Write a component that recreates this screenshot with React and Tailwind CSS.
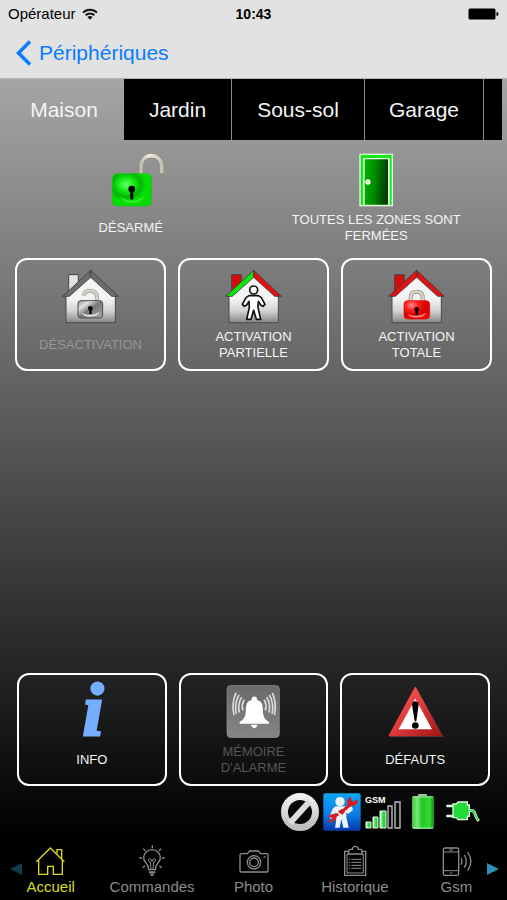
import { clsx } from 'clsx';

const tabs = [
  { name: 'Maison', width: 'w-31' },
  { name: 'Jardin', width: 'w-27' },
  { name: 'Sous-sol', width: 'w-[133px]' },
  { name: 'Garage', width: 'w-[119px]' },
];

function WifiIcon() {
  return (
    <svg width="16" height="12" viewBox="0 0 16 12" fill="none" stroke="#111" strokeWidth="1.9">
      <path d="M1 4.6a10 10 0 0 1 14 0" />
      <path d="M3.6 7.3a6.3 6.3 0 0 1 8.8 0" />
      <path d="M8 11.8 5.4 9.1a3.8 3.8 0 0 1 5.2 0z" fill="#111" stroke="none" />
    </svg>
  );
}

function BatteryFullIcon() {
  return (
    <svg width="31" height="12" viewBox="0 0 31 12">
      <rect x="0.5" y="0.5" width="27" height="11" rx="1.5" />
      <path d="M28.5 4a2 2 0 0 1 0 4z" />
    </svg>
  );
}

function UnlockedIcon() {
  return (
    <svg width="68" height="54" viewBox="51 39 204 162">
      <defs>
        <linearGradient id="steel" x1="0" x2="1">
          <stop offset="0" stopColor="#bdbaaa" />
          <stop offset="0.4" stopColor="#eeece2" />
          <stop offset="1" stopColor="#c4c1b2" />
        </linearGradient>
        <radialGradient id="greenLock" cx="0.36" cy="0.34" r="0.75">
          <stop offset="0" stopColor="#6dff6d" />
          <stop offset="0.25" stopColor="#18ee18" />
          <stop offset="0.5" stopColor="#04b404" />
          <stop offset="0.7" stopColor="#06e006" />
          <stop offset="1" stopColor="#05d805" />
        </radialGradient>
      </defs>
      <path d="M183 104V76a31 29 0 0 1 62 0v25" fill="none" stroke="#8d8a7d" strokeWidth="16" />
      <path d="M183 104V76a31 29 0 0 1 62 0v24" fill="none" stroke="url(#steel)" strokeWidth="11" />
      <rect x="97" y="101" width="117" height="97" rx="14" fill="url(#greenLock)" stroke="#06d006" strokeWidth="2" />
      <path d="M120 170q36 24 74-2q-8 20-37 21q-27-1-37-19z" fill="#3cf53c" opacity="0.7" />
      <circle cx="155" cy="147" r="10" />
      <path d="M151 150h9v26q-4 5-9 0z" />
    </svg>
  );
}

function DoorIcon() {
  return (
    <svg width="36" height="54" viewBox="264 38 108 162">
      <defs>
        <linearGradient id="door" x1="0" y1="0" x2="1" y2="0.15">
          <stop offset="0" stopColor="#00b400" />
          <stop offset="0.5" stopColor="#008a00" />
          <stop offset="1" stopColor="#003c00" />
        </linearGradient>
      </defs>
      <rect x="268" y="40" width="101" height="158" fill="#d9ffd9" />
      <path d="M272 44h93v150H272z" fill="#12e812" />
      <path d="M279 53h80v141h-80z" fill="#e9ffe9" />
      <path d="M284 57h70v136h-70z" fill="url(#door)" />
      <circle cx="294" cy="125" r="8" fill="#e5fbe5" />
      <circle cx="294" cy="125" r="2" fill="#a5c0a5" />
    </svg>
  );
}

function House({ left, right, chimney, children }) {
  return (
    <svg width="57" height="55" viewBox="0 0 171 165">
      <defs>
        <linearGradient id="wall" x1="0" y1="0" x2="0" y2="1">
          <stop offset="0.5" stopColor="#f4f4f4" />
          <stop offset="0.75" stopColor="#d5d5d5" />
          <stop offset="1" stopColor="#858585" />
        </linearGradient>
      </defs>
      <path d="M20 17h29v32L20 72z" fill={chimney} stroke="#444" strokeWidth="3" />
      <path d="M12 78 86 14l74 64v83H12z" fill="url(#wall)" stroke="#4b4b4b" strokeWidth="3" />
      <path d="M86 4 2 82h20L86 25z" fill={left} stroke="#3c3c3c" strokeWidth="2.5" />
      <path d="M86 4l83 78h-20L86 25z" fill={right} stroke="#3c3c3c" strokeWidth="2.5" />
      {children}
    </svg>
  );
}

function HouseUnlockedIcon() {
  return (
    <House left="#6d6d6d" right="#6d6d6d" chimney="#e2e2e2">
      <defs>
        <linearGradient id="greyLock" x1="0" y1="0" x2="1" y2="1">
          <stop offset="0" stopColor="#888" />
          <stop offset="0.25" stopColor="#e2e2e2" />
          <stop offset="0.5" stopColor="#777" />
          <stop offset="1" stopColor="#a8a8a8" />
        </linearGradient>
      </defs>
      <path d="M64 80q4-15 21-15 20 1 20 20v12" fill="none" stroke="#9d9b8e" strokeWidth="12" />
      <path d="M64 80q4-15 21-15 20 1 20 20v12" fill="none" stroke="#d3d1c4" strokeWidth="8" />
      <rect x="48" y="95" width="74" height="52" rx="9" fill="url(#greyLock)" stroke="#4d4d4d" strokeWidth="3" />
      <path d="M58 131q27 15 55-1q-7 13-28 13-20 0-27-12z" fill="#e5e5e5" />
      <circle cx="85" cy="118" r="7" />
      <path d="M82 120h7v15h-7z" />
    </House>
  );
}

function HousePersonIcon() {
  return (
    <House left="#0be70b" right="#e01010" chimney="#d80b0b">
      <g fill="#fff" stroke="#111" strokeWidth="5" strokeLinejoin="round">
        <path d="M72 80h28l9 6 11 20-6 6-7-4-7-11-1 18 8 36H94l-8-27-8 27H65l8-36-1-18-7 11-7 4-6-6 11-20z" />
        <circle cx="86" cy="63" r="12" />
      </g>
    </House>
  );
}

function HouseLockedIcon() {
  return (
    <House left="#e01212" right="#e01212" chimney="#d80b0b">
      <defs>
        <radialGradient id="redLock" cx="0.3" cy="0.25" r="0.9">
          <stop offset="0" stopColor="#ff8a8a" />
          <stop offset="0.3" stopColor="#ff1c1c" />
          <stop offset="0.6" stopColor="#d40000" />
          <stop offset="1" stopColor="#f80000" />
        </radialGradient>
      </defs>
      <path d="M68 98V84q1-16 18-16t18 16v14" fill="none" stroke="#8f8d80" strokeWidth="12" />
      <path d="M68 98V84q1-16 18-16t18 16v14" fill="none" stroke="#d3d1c4" strokeWidth="8" />
      <rect x="48" y="95" width="77" height="55" rx="11" fill="url(#redLock)" stroke="#e30000" strokeWidth="2" />
      <path d="M58 134q28 14 57-2q-7 14-29 14-21 0-28-12z" fill="#ff8080" />
      <circle cx="86" cy="121" r="7" />
      <path d="M83 122h7v16h-7z" />
    </House>
  );
}

function InfoIcon() {
  return (
    <svg width="57" height="55" viewBox="0 0 57 55" className="overflow-visible" aria-hidden="true">
      <text
        x="30"
        y="51"
        textAnchor="middle"
        fill="#75adff"
        stroke="#75adff"
        strokeWidth="3"
        className="font-['Liberation_Serif',serif] text-[74px] font-bold italic"
      >
        i
      </text>
    </svg>
  );
}

function BellIcon() {
  return (
    <svg width="55" height="55" viewBox="170 60 165 162">
      <defs>
        <linearGradient id="bellTile" x1="0" y1="0" x2="0" y2="1">
          <stop offset="0" stopColor="#6a6a6a" />
          <stop offset="1" stopColor="#858585" />
        </linearGradient>
      </defs>
      <rect x="173" y="63" width="157" height="156" rx="11" fill="url(#bellTile)" stroke="#959595" strokeWidth="2" />
      <g fill="#fff">
        <circle cx="255" cy="104" r="8" />
        <path d="M230 128q1-22 25-22t25 22c1 22 1 34 19 44v6h-88v-6c18-10 18-22 19-44z" />
        <path d="M245 181h19q-2 10-9 10t-10-10z" />
      </g>
      <g fill="none" stroke="#dcdcdc" strokeWidth="5">
        <path d="M225 106q-10 14-4 32M217 98q-13 22-7 46M209 91q-15 27-8 57M200 85q-14 32-6 67" />
        <path d="M284 106q10 14 4 32M292 98q13 22 7 46M300 91q15 27 8 57M309 85q14 32 6 67" />
      </g>
    </svg>
  );
}

function WarningIcon() {
  return (
    <svg width="57" height="55" viewBox="152 58 171 162">
      <defs>
        <linearGradient id="warn" x1="0" y1="0" x2="1" y2="1">
          <stop offset="0.3" stopColor="#f04848" />
          <stop offset="1" stopColor="#a31515" />
        </linearGradient>
      </defs>
      <path d="M241 69l80 146H161z" fill="#4a4a4a" />
      <path d="M237 67l78 144H159z" fill="url(#warn)" stroke="url(#warn)" strokeWidth="4" strokeLinejoin="round" />
      <path d="M237 100l50 92H187z" fill="#fff" />
      <path d="M227 118q1-10 10-10t10 10l-7 50h-5z" />
      <circle cx="237" cy="181" r="10" />
    </svg>
  );
}

function ForbiddenIcon() {
  return (
    <svg width="38" height="38" viewBox="1 1 38 38">
      <defs>
        <linearGradient id="ring" x1="0" y1="0" x2="0" y2="1">
          <stop offset="0" stopColor="#f2f2f2" />
          <stop offset="1" stopColor="#bdbdbd" />
        </linearGradient>
      </defs>
      <circle cx="20" cy="20" r="15.5" fill="none" stroke="url(#ring)" strokeWidth="7" />
      <path d="M30 9 10 31" stroke="#dcdcdc" strokeWidth="6" />
    </svg>
  );
}

function ServiceIcon() {
  return (
    <svg width="38" height="38" viewBox="158 22 114 114">
      <defs>
        <linearGradient id="serviceTile" x1="0" y1="0" x2="0" y2="1">
          <stop offset="0" stopColor="#0aa6f2" />
          <stop offset="0.55" stopColor="#0d7fe6" />
          <stop offset="1" stopColor="#0538a8" />
        </linearGradient>
      </defs>
      <rect x="159" y="23" width="112" height="112" rx="6" fill="url(#serviceTile)" />
      <g fill="#eef2f6">
        <circle cx="209" cy="48" r="14" />
        <path d="M196 62h28l10 4 10-4 4 10-14 12-6-3v14l4 17 3 14h-16l-6-26-5 26h-14l3-17 1-16-2-13-8 12 3 6-9 3-4-9 10-24z" />
      </g>
      <path d="M187 92 204 86 M216 77 241 55" stroke="#d91c24" strokeWidth="9" />
      <path d="M202 78l14 9 8-8-10-9z" fill="#d91c24" />
      <path
        d="M231 55q-4-17 11-21l1 10 7 4 12-7q2 17-14 20l-10 2zM196 86q-5-4-11 0-10 2-12 9l9-1 3 7-12 5q8 8 18 1 8-6 8-16z"
        fill="#d91c24"
      />
    </svg>
  );
}

function GsmIcon() {
  return (
    <svg width="36" height="36" viewBox="0 0 36 36">
      <text x="0" y="9" fill="#fff" className="font-['Liberation_Sans',sans-serif] text-[9px] font-bold">GSM</text>
      <defs>
        <linearGradient id="bars" x1="0" y1="0" x2="1" y2="0">
          <stop offset="0" stopColor="#c4ffc4" />
          <stop offset="0.6" stopColor="#25d53c" />
        </linearGradient>
      </defs>
      <g fill="url(#bars)" stroke="#eaffea">
        <path d="M1 28h5v6H1z" />
        <path d="M8 23h5v11H8z" />
        <path d="M15 17h6v17h-6z" />
      </g>
      <g fill="#0b0b0b" stroke="#b9b9b9" strokeWidth="1.4">
        <path d="M23 12h4v22h-4zM30 8h5v26h-5z" />
      </g>
    </svg>
  );
}

function CellIcon() {
  return (
    <svg width="24" height="36" viewBox="0 0 24 36">
      <defs>
        <linearGradient id="cell" x1="0" x2="1">
          <stop offset="0" stopColor="#3fc53f" />
          <stop offset="0.25" stopColor="#7be87b" />
          <stop offset="0.45" stopColor="#23c823" />
          <stop offset="0.8" stopColor="#2fdb2f" />
          <stop offset="1" stopColor="#148a14" />
        </linearGradient>
      </defs>
      <rect x="7" y="0" width="9" height="4" rx="1" fill="#9fc79f" />
      <rect x="1" y="2" width="22" height="33" rx="2" fill="url(#cell)" />
      <path d="M2 3h20M2 34h20" stroke="#b8dcb8" />
    </svg>
  );
}

function PlugIcon() {
  return (
    <svg width="36" height="26" viewBox="525 40 108 72">
      <path d="M529 58h24M529 88h24" stroke="#d8ffd8" strokeWidth="8" />
      <path d="M549 52h10l5-6h28v9h6v34h-6v10h-28l-5-6h-10z" fill="#24d83a" stroke="#dcffdc" strokeWidth="4" />
      <path d="M598 72q14-3 17 9t11 22" fill="none" stroke="#c9f7c9" strokeWidth="9" />
      <path d="M598 72q14-3 17 9t10 20" fill="none" stroke="#24d83a" strokeWidth="4" />
    </svg>
  );
}

function HomeNavIcon() {
  return (
    <svg width="31" height="32" viewBox="108 30 93 96" fill="none" stroke="currentColor" strokeWidth="4">
      <path d="M112 80l42-41 42 41" />
      <path d="M119 75v43h27V94h17v24h27V75" />
      <path d="M174 56V44h14v27" />
    </svg>
  );
}

function BulbNavIcon() {
  return (
    <svg width="32" height="32" viewBox="411 30 96 96" fill="none" stroke="currentColor" strokeWidth="4">
      <path d="M449 104q0-12-8-20-7-7-7-16a25 24 0 0 1 50 0q0 9-7 16-8 8-8 20z" />
      <path d="M450 112h19M454 119h10" strokeWidth="6" />
      <path d="M456 102l-2-22q-7-1-6-6t7-2l4 7 4-7q6-3 7 2t-6 6l-2 22" strokeWidth="3" />
      <path d="M460 31v9M433 41l6 6M486 41l-6 6M421 69h8M489 69h8M431 98l7-6M488 98l-7-6" />
    </svg>
  );
}

function CameraNavIcon() {
  return (
    <svg width="32" height="32" viewBox="714 30 96 96" fill="none" stroke="currentColor" strokeWidth="4">
      <path d="M724 56h18l7-8h26l7 8h18q4 0 4 4v47q0 4-4 4h-76q-4 0-4-4V60q0-4 4-4z" />
      <circle cx="762" cy="82" r="20" />
      <circle cx="762" cy="82" r="13" />
      <path d="M791 66h6" />
    </svg>
  );
}

function ClipboardNavIcon() {
  return (
    <svg width="32" height="32" viewBox="258 30 96 96" fill="none" stroke="currentColor" strokeWidth="4">
      <path d="M289 49h-14v72h63V49h-14" />
      <path d="M289 57h-7v57h49V57h-7" strokeWidth="3" />
      <path d="M287 57v-9q0-4 5-5h6q1-9 9-9t9 9h6q5 1 5 5v9z" />
      <path d="M287 73h4M295 73h30M287 82h4M295 82h30M287 91h4M295 91h30M287 100h4M295 100h30" strokeWidth="3" />
    </svg>
  );
}

function PhoneNavIcon() {
  return (
    <svg width="35" height="32" viewBox="561 30 105 96" fill="none" stroke="currentColor" strokeWidth="4">
      <rect x="574" y="39" width="46" height="82" rx="5" />
      <path d="M574 51h46M574 107h46M591 45h12M594 114h7" strokeWidth="3" />
      <path d="M627 69q6 9 0 20M637 60q12 18 0 38M647 51q19 28 0 56" />
    </svg>
  );
}

const actions = [
  { label: 'DÉSACTIVATION', icon: HouseUnlockedIcon, disabled: true },
  { label: 'ACTIVATION PARTIELLE', icon: HousePersonIcon },
  { label: 'ACTIVATION TOTALE', icon: HouseLockedIcon },
];

const reports = [
  { label: 'INFO', icon: InfoIcon },
  { label: "MÉMOIRE D'ALARME", icon: BellIcon, disabled: true },
  { label: 'DÉFAUTS', icon: WarningIcon },
];

const navItems = [
  { label: 'Accueil', icon: HomeNavIcon, active: true },
  { label: 'Commandes', icon: BulbNavIcon },
  { label: 'Photo', icon: CameraNavIcon },
  { label: 'Historique', icon: ClipboardNavIcon },
  { label: 'Gsm', icon: PhoneNavIcon },
];

function Tile({ label, icon: Icon, disabled, dimClass }) {
  return (
    <button
      type="button"
      disabled={disabled}
      className="flex flex-col items-center rounded-xl border-2 border-white px-4 pt-[9px] pb-2"
    >
      <Icon />
      <span
        className={clsx(
          'mt-[5px] flex h-8 max-w-28 items-center text-center text-[13px] leading-4',
          disabled ? dimClass : 'text-gray-100'
        )}
      >
        {label}
      </span>
    </button>
  );
}

function ZoneStatus({ label, icon: Icon }) {
  return (
    <div className="flex flex-1 flex-col items-center">
      <Icon />
      <p className="mt-[5px] flex h-8 max-w-48 items-center text-center text-[13px] leading-4 text-gray-100">
        {label}
      </p>
    </div>
  );
}

export default function App() {
  return (
    <div className="flex min-h-screen flex-col bg-black font-['Liberation_Sans',Arial,sans-serif]">
      <header className="border-b border-[#b5b5b5] bg-[#e2e2e2]">
        <div className="grid h-7 grid-cols-3 items-center px-2 text-black">
          <div className="flex items-center gap-1.5 text-[15px]">
            Opérateur
            <WifiIcon />
          </div>
          <span className="text-center text-sm font-bold">10:43</span>
          <div className="flex justify-end">
            <BatteryFullIcon />
          </div>
        </div>
        <div className="flex h-[50px] items-center px-4">
          <a href="#peripheriques" className="flex items-center gap-2 text-[21px] leading-6 text-[#0a7cff]">
            <svg width="15" height="26" viewBox="0 0 15 26" fill="none" stroke="currentColor" strokeWidth="3.5">
              <path d="M14 1.5 2.5 13 14 24.5" />
            </svg>
            Périphériques
          </a>
        </div>
      </header>

      <main className="flex flex-1 flex-col bg-linear-to-b/srgb from-[#a5a5a5] to-black">
        <div className="mr-[5px] flex h-[61px]">
          {tabs.map((tab, i) => (
            <button
              key={tab.name}
              type="button"
              className={clsx(
                'shrink-0 text-[21px] text-gray-100',
                tab.width,
                i === 0 ? 'pl-1' : 'border-r border-[#8a8a8a] bg-black'
              )}
            >
              {tab.name}
            </button>
          ))}
          <div className="flex-1 bg-black" />
        </div>

        <section className="flex px-2 pt-[13px]">
          <ZoneStatus label="DÉSARMÉ" icon={UnlockedIcon} />
          <ZoneStatus label="TOUTES LES ZONES SONT FERMÉES" icon={DoorIcon} />
        </section>

        <section className="mt-3.5 grid grid-cols-3 gap-3 px-[15px]">
          {actions.map(action => (
            <Tile key={action.label} {...action} dimClass="text-[#969696]" />
          ))}
        </section>

        <section className="mt-auto grid grid-cols-3 gap-3 px-[17px]">
          {reports.map(report => (
            <Tile key={report.label} {...report} dimClass="text-[#555]" />
          ))}
        </section>

        <div className="flex h-[51px] items-center justify-end gap-1 pr-[26px]">
          <ForbiddenIcon />
          <ServiceIcon />
          <GsmIcon />
          <div className="px-1.5">
            <CellIcon />
          </div>
          <PlugIcon />
        </div>
      </main>

      <nav className="relative flex bg-black pt-2 pb-[3px]">
        {navItems.map(({ label, icon: Icon, active }) => (
          <a
            key={label}
            href={`#${label.toLowerCase()}`}
            className={clsx(
              'flex flex-1 basis-0 flex-col items-center text-[15px] leading-5',
              active ? 'text-[#d9dc1c]' : 'text-[#8c8c8c]'
            )}
          >
            <Icon />
            {label}
          </a>
        ))}
        <button type="button" aria-label="Précédent" className="absolute top-[26px] left-2.5 text-[#123a4c]">
          <svg width="12" height="12" viewBox="0 0 12 12" fill="currentColor">
            <path d="M12 0v12L0 6z" />
          </svg>
        </button>
        <button type="button" aria-label="Suivant" className="absolute top-[26px] right-2 text-[#2f8fb5]">
          <svg width="12" height="12" viewBox="0 0 12 12" fill="currentColor">
            <path d="M0 0v12l12-6z" />
          </svg>
        </button>
      </nav>
    </div>
  );
}
